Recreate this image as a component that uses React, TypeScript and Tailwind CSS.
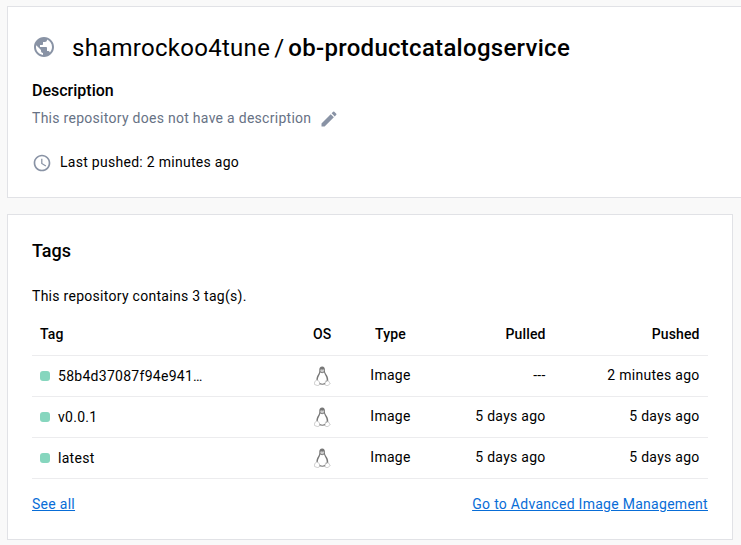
import React from 'react';
import { MdPublic, MdEdit, MdAccessTime } from 'react-icons/md';

function Tux() {
  return (
    <svg className="ml-px" width="17" height="20" viewBox="0 0 17 20" fill="none">
      <path d="M8.200.4C6.200.4 5.300 1.700 5.300 3.600c0 2.300 0 3.200-1.200 4.900C3 10.200 2.200 12 2.500 14.500L5 18.300q3.400.8 6.700 0l2.500-3.800c.3-2.500-.8-4.500-2-6.200-1.200-1.600-1.300-2.700-1.300-4.700C10.900 1.700 10.200.4 8.200.4Z" fill="#777" />
      <path d="M6.300 6.400 8.200 7.200 10.100 6.400c.4 2.200 2.600 3.800 2.600 7.200 0 2.500-1.800 4.100-4.400 4.100s-4.500-1.700-4.500-4.100c0-2.700 2.200-5 2.500-7.200Z" fill="#fff" />
      <path d="m6.300 3.700 1-.4.9.4.9-.4 1 .4v1.600L8.200 6.400 6.300 5.300Z" fill="#ccc" />
      <path d="M2.600 14.100c.9-.5 1.800.4 2.500 1.600.9 1.500.9 3.300-.8 3.700-1.200.3-2.200-.4-3.300-.7-.9-.3-.5-1.100-.4-1.900-.1-1.500.7-1.700 2-2.700Z" fill="#fff" stroke="#aaa" strokeWidth=".6" />
      <path d="M11.600 14.800c.6 1.100 1.700.8 2.200-.3.900.1 1 .9 1.200 1.600.6.6 1.700 1.200.8 1.900-1 .7-1.600 1.600-3 1.600-1.600 0-2-1.100-1.700-2.400Z" fill="#fff" stroke="#aaa" strokeWidth=".6" />
    </svg>
  );
}

const rows = [
  { tag: '58b4d37087f94e941…', pulled: '---', pushed: '2 minutes ago' },
  { tag: 'v0.0.1', pulled: '5 days ago', pushed: '5 days ago' },
  { tag: 'latest', pulled: '5 days ago', pushed: '5 days ago' },
];

export default function App() {
  return (
    <div className="h-[545px] w-[741px] overflow-hidden bg-[#f9f9f9] pl-[7px] pt-[6px] font-['Roboto',sans-serif] text-sm tracking-[0.28px] text-black">
      <section className="h-[192px] w-[750px] border border-[#e1e2e6] bg-white pl-6">
        <h1 className="mt-6 flex h-8 items-center text-2xl leading-8 tracking-[0.28px]">
          <MdPublic className="mr-4 size-6 text-[#8993a5]" />
          <span className="pt-px">shamrockoo4tune</span><span className="mx-1 pt-px">/</span><span className="pt-px font-medium">ob-productcatalogservice</span>
        </h1>
        <h2 className="mt-4 text-base font-medium leading-6 tracking-normal">Description</h2>
        <p className="mt-[3px] flex h-6 items-center text-[#677285]">This repository does not have a description<MdEdit className="ml-2 mt-0.5 size-5 text-[#8993a5]" /></p>
        <p className="mt-5 flex h-6 items-center"><MdAccessTime className="mr-2 mt-0.5 size-5 text-[#8993a5]" />Last pushed: 2 minutes ago</p>
      </section>
      <section className="mt-4 h-[326px] w-[726px] border border-[#e1e2e6] bg-white px-6">
        <h2 className="mt-6 text-lg font-medium leading-6 tracking-normal">Tags</h2>
        <p className="mt-[23px] leading-5">This repository contains 3 tag(s).</p>
        <table className="mt-2 w-full table-fixed border-collapse leading-5">
          <colgroup><col className="w-[273px]" /><col className="w-[34px]" /><col className="w-[103px]" /><col className="w-[112px]" /><col /></colgroup>
          <thead><tr className="h-[41px] border-b border-[#ececee] text-left tracking-[0.14px]">
            <th className="px-2 font-medium">Tag</th><th className="px-2 font-medium">OS</th><th className="px-2 text-center font-medium">Type</th><th className="pl-2 pr-[8.4px] text-right font-medium">Pulled</th><th className="pl-2 pr-[8.4px] text-right font-medium">Pushed</th>
          </tr></thead>
          <tbody>{rows.map((r) => (
            <tr key={r.tag} className="h-[41px] border-b border-[#ececee]">
              <td className="px-2"><div className="flex items-center gap-2"><span className="size-[10px] rounded-[3px] bg-[#86d6be]" />{r.tag}</div></td>
              <td className="px-2"><Tux /></td><td className="px-2 pb-0.5 text-center">Image</td><td className="pb-0.5 pl-2 pr-[8.4px] text-right">{r.pulled}</td><td className="pb-0.5 pl-2 pr-[8.4px] text-right">{r.pushed}</td>
            </tr>
          ))}</tbody>
        </table>
        <div className="mt-[15px] flex justify-between leading-5 text-[#086dd7] underline"><a href="#">See all</a><a href="#">Go to Advanced Image Management</a></div>
      </section>
    </div>
  );
}
